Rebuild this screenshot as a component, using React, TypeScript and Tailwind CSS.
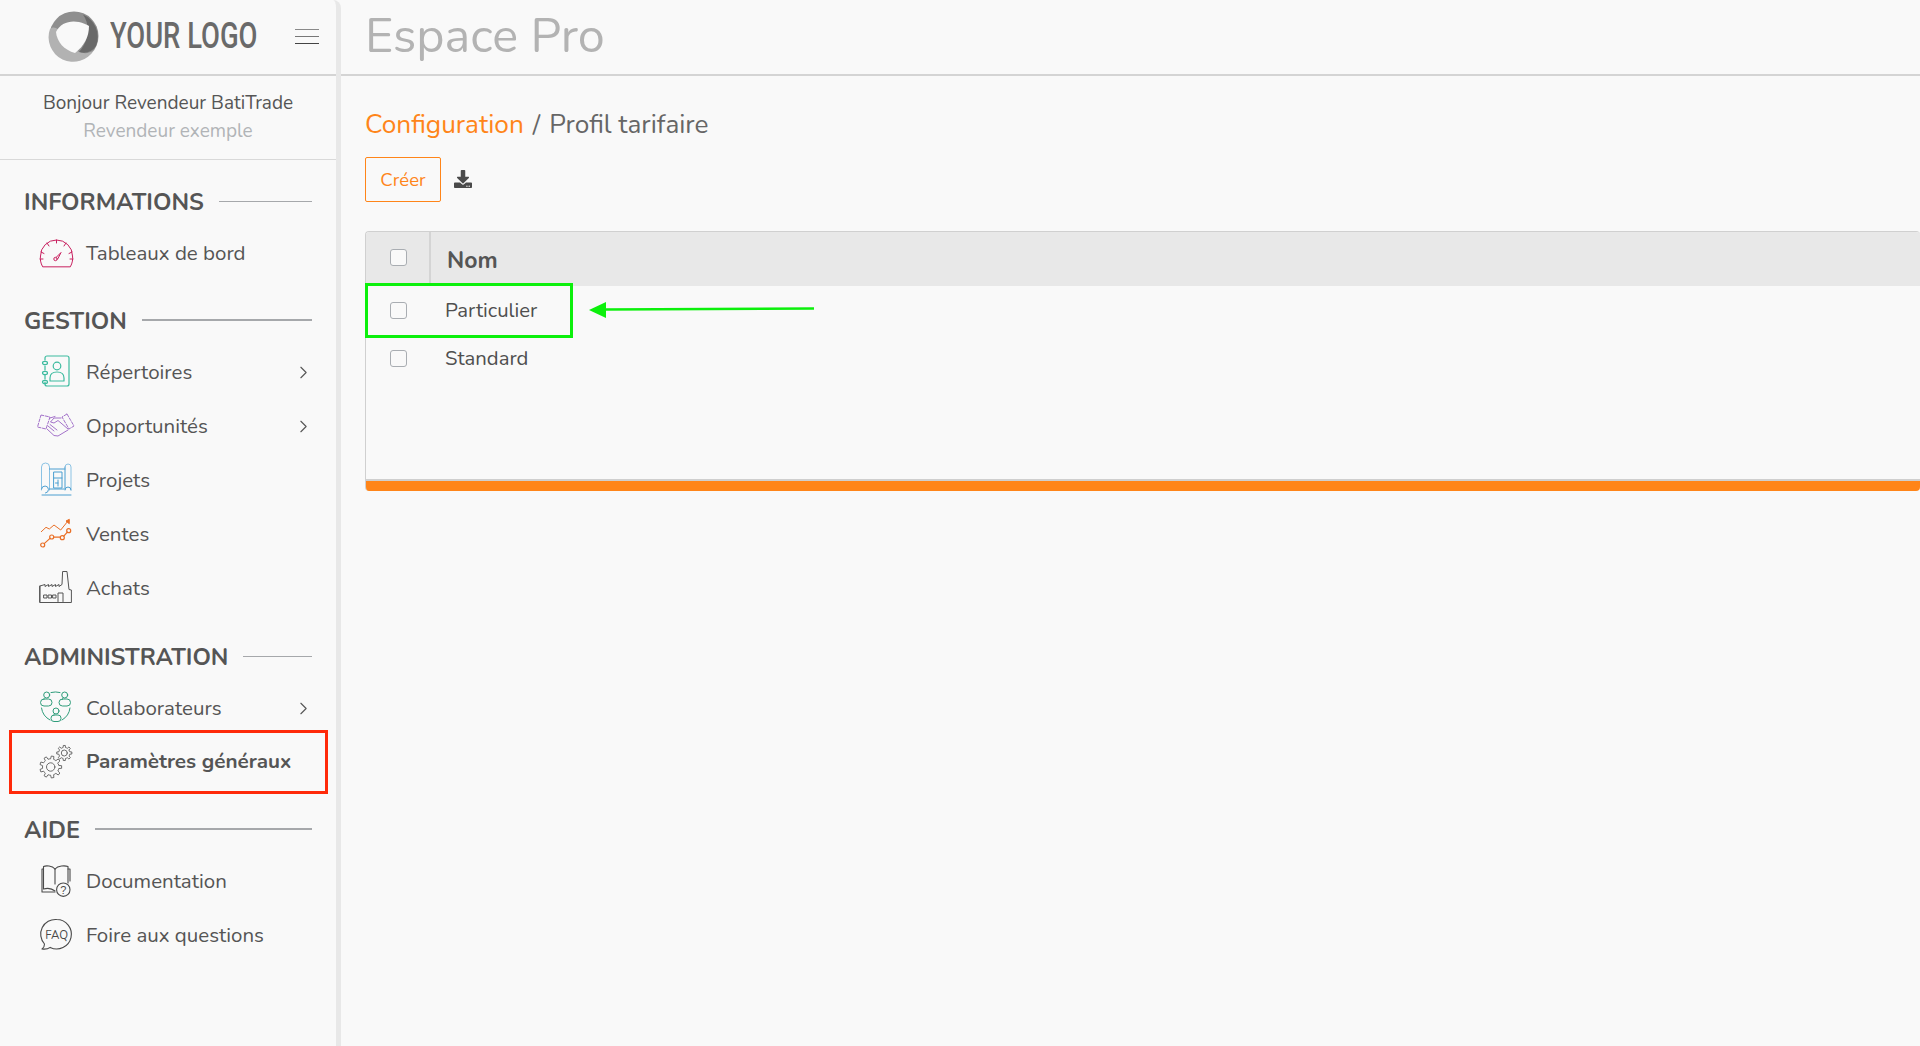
import React from "react";
import { ChevronRight } from "lucide-react";
import { FaDownload } from "react-icons/fa";

function gearPath(cx: number, cy: number, ro: number, ri: number, teeth: number) {
  const pts: string[] = [];
  const step = (Math.PI * 2) / teeth;
  for (let i = 0; i < teeth; i++) {
    const a = i * step;
    const seq: [number, number][] = [
      [ri, a - step * 0.5],
      [ri, a - step * 0.27],
      [ro, a - step * 0.17],
      [ro, a + step * 0.17],
      [ri, a + step * 0.27],
    ];
    seq.forEach(([r, t]) => {
      pts.push(`${(cx + r * Math.cos(t)).toFixed(2)} ${(cy + r * Math.sin(t)).toFixed(2)}`);
    });
  }
  return "M" + pts.join("L") + "Z";
}

function Svg({ children, color, w = 1 }: { children: React.ReactNode; color: string; w?: number }) {
  return (
    <svg width="42" height="42" viewBox="0 0 42 42" fill="none" stroke={color} strokeWidth={w} strokeLinejoin="round" strokeLinecap="round" className="shrink-0">
      {children}
    </svg>
  );
}

const Gauge = () => (
  <Svg color="#c8205f">
    <path d="M8.500 34.500 C6.500 31 6 27 6.500 24 A16 16 0 0 1 38.500 24 C39 27 38.500 31 36.500 34.500 Z" />
    <path d="M22.500 8v3M13 11l2 3M32 11l-2 3M7 20l3 1.500M38 20l-3 1.500M6 27h3M39 27h-3" />
    <path d="M22 25.500 L27 20.500 L24 26.500" />
    <circle cx="21.500" cy="27" r="1.700" />
  </Svg>
);
const Repertoires = () => (
  <Svg color="#3dbb9f" w={1.200}>
    <path d="M11 9V7a2 2 0 0 1 2-2h20a2 2 0 0 1 2 2v26a2 2 0 0 1-2 2H13a2 2 0 0 1-2-2v-2" />
    <path d="M11 15v4M11 24v4" />
    <ellipse cx="11" cy="12" rx="2.500" ry="1.600" />
    <ellipse cx="11" cy="22" rx="2.500" ry="1.600" />
    <ellipse cx="11" cy="31" rx="2.500" ry="1.600" />
    <circle cx="23" cy="15" r="3.800" />
    <path d="M16 30v-3c0-5 3.500-6 7-6s7 1 7 6v3Z" />
  </Svg>
);
const Handshake = () => (
  <Svg color="#9a63c4" w={0.900}>
    <path d="M7 10 L16 12 L12 24 L3.500 22 Z" strokeDasharray="3 1.500" />
    <path d="M33 9 L40 21 L35 24 L28 12 Z" strokeDasharray="3 1.500" />
    <path d="M16 13 L21 11.500 M27 13 L20 13 L16.500 17 L20 18 L24 15.500 L34 24" />
    <path d="M14 21 L20 26 M16 19.500 L23 25" />
    <path d="M13 24 L20 30.500 L24 31 L34 25" />
  </Svg>
);
const Projets = () => (
  <Svg color="#4b9ed0">
    <path d="M7.500 31V8a4 4 0 0 1 4-4 4 4 0 0 1 4 4v23" stroke="#8cc3e4" />
    <path d="M7.500 30a3.500 3.500 0 1 1 4 4" />
    <path d="M31 8a3 3 0 0 1 6 0v23" stroke="#8cc3e4" />
    <path d="M31 8v21M37 31a3 3 0 1 0-6 0" />
    <path d="M15.500 10H31M15.500 30H31M8 36H37" />
    <path d="M20 13H28V29H20Z M20 19H28 M24 21V27M21.500 24H24" />
  </Svg>
);
const Ventes = () => (
  <Svg color="#e96f26">
    <path d="M7.300 18.700 12 14.300 15.300 16 20 12 26.700 17 34 8" />
    <path d="M35 6.500 L32 8 L35 10.500 Z" fill="#e96f26" />
    <circle cx="8.700" cy="32" r="2" strokeWidth="1.200" />
    <circle cx="17.700" cy="24" r="2" strokeWidth="1.200" />
    <circle cx="28.300" cy="24.700" r="2" strokeWidth="1.200" />
    <circle cx="34.700" cy="17.700" r="2" strokeWidth="1.200" />
    <path d="M10.200 30.600 16 25.400M19.700 24.100H26.300M29.800 23.200 33.300 19.200" strokeWidth="1.200" />
  </Svg>
);
const Achats = () => (
  <Svg color="#555555">
    <path d="M6 34.500V19M6 19l5-1.500v2l3.500-2v2l3.500-2v2l3.500-2v2l3.500-2v2l3-2 .6-13h4.400l2 18 2.400 .5v12.500H6Z" />
    <path d="M10 28h3v3h-3ZM14.500 28h3v3h-3ZM19 28h3v3h-3ZM24 34.500V26h5v8.500" />
  </Svg>
);
const Collab = () => (
  <Svg color="#2f9d7b">
    <circle cx="12.700" cy="8" r="3" />
    <circle cx="30.700" cy="8" r="3" />
    <circle cx="22" cy="24" r="3" />
    <rect x="6.500" y="12" width="11.500" height="7" rx="3.500" />
    <rect x="25" y="12" width="11.500" height="7" rx="3.500" />
    <rect x="17" y="28" width="10" height="6.500" rx="3" />
    <path d="M17 5.500A18 18 0 0 1 26 5.500M7.500 21A16 16 0 0 0 16 33M36 21A16 16 0 0 1 28 33" />
  </Svg>
);
const Gears = () => (
  <Svg color="#5e5e5e" w={0.900}>
    <path d={gearPath(16.7, 26, 11, 8.2, 9)} />
    <circle cx="16.700" cy="26" r="4.200" />
    <path d={gearPath(30.3, 12, 7.6, 5.6, 8)} />
    <circle cx="30.300" cy="12" r="3" />
  </Svg>
);
const Book = () => (
  <Svg color="#4a4a4a" w={1.100}>
    <path d="M21 9C18 5.500 12 5.500 9.500 6.500V29C13 28 18 28.500 21 31" />
    <path d="M21 9C24 5.500 31 5.500 34 6.500V23" />
    <path d="M21 9V24" />
    <path d="M9.500 9H8V32H21" />
    <path d="M34 9h2v12" />
    <circle cx="29.300" cy="29.700" r="6.700" fill="#f9f9f9" />
    <text x="29.300" y="33.500" fontSize="11" textAnchor="middle" fill="#4a4a4a" stroke="none" fontFamily="Liberation Sans, sans-serif">?</text>
  </Svg>
);
const Faq = () => (
  <Svg color="#4a4a4a" w={1.100}>
    <path d="M22.700 5.500a14.700 14.700 0 1 1-6.500 27.900C14 35 11.500 35.500 8 35c1.500-1 2.500-3 2.500-5A14.700 14.700 0 0 1 22.700 5.500Z" />
    <text x="22.700" y="24.500" fontSize="11.500" textAnchor="middle" fill="#4a4a4a" stroke="none" fontFamily="Nunito, Noto Sans, sans-serif">FAQ</text>
  </Svg>
);

function Logo() {
  return (
    <svg width="52" height="52" viewBox="0 0 52 52" className="shrink-0">
      <circle cx="26" cy="26" r="24.500" fill="#8f8f8f" />
      <path d="M2 19 A24.500 24.500 0 0 0 46 40 C36 48 22 40 14 24 C10 17 5 16 2 19Z" fill="#b2b2b2" />
      <path d="M35 4.500 A24.500 24.500 0 0 1 48 36 C44 42 38 44 31 42 C42 30 42 14 35 4.500Z" fill="#696969" />
      <path d="M8 22 C12 13 22 10 31 12 C35 13 38 14 41 16 C41 27 36 36 27 43 C16 40 9 32 8 22Z" fill="#f9f9f9" />
    </svg>
  );
}

function Heading({ label, thick }: { label: string; thick?: boolean }) {
  return (
    <div className="flex h-10 items-center pl-6 pr-6 gap-[15px]">
      <span className="pt-[3px] text-[23.500px] font-bold text-[#555555] leading-none whitespace-nowrap">{label}</span>
      <span className={thick ? "flex-1 h-[2px] bg-[#a6a8ab]" : "flex-1 h-px bg-[#a6a8ab]"} />
    </div>
  );
}

function Item({ icon, label, chevron, bold }: { icon: React.ReactNode; label: string; chevron?: boolean; bold?: boolean }) {
  return (
    <div className="flex h-[54px] items-center pl-[34px] pr-[22px]">
      {icon}
      <span className={bold ? "ml-[10px] flex-1 text-[20.700px] font-bold text-[#555555]" : "ml-[10px] flex-1 text-[20.500px] text-[#555555]"}>{label}</span>
      {chevron && <ChevronRight size={21} strokeWidth={1.300} className="text-[#555555]" />}
    </div>
  );
}

function Box() {
  return <span className="block w-[17px] h-[17px] rounded-[3px] border border-[#a9adb2] bg-[#f9f9f9]" />;
}

export default function App() {
  return (
    <div className="relative flex w-[1920px] h-[1046px] overflow-hidden bg-[#f9f9f9] font-['Nunito','Noto_Sans',sans-serif] text-[#555555]">
      <aside className="w-[341px] shrink-0 border-r-[5px] border-[#e8e8e8] rounded-tr-lg">
        <div className="flex items-center h-[76px] border-b-2 border-[#d4d4d4] pl-[48px] pr-[17px] pb-[2px]">
          <Logo />
          <span className="ml-[10px] w-[145px] -mt-[2px] text-[37px] leading-none font-medium font-['Roboto',sans-serif] text-[#6a6a6a] whitespace-nowrap origin-left scale-x-[0.74]">YOUR LOGO</span>
          <div className="ml-auto flex flex-col w-6">
            <span className="block h-px bg-[#8a8a8a]" />
            <span className="block h-px bg-[#777777] mt-[6.500px]" />
            <span className="block h-px bg-[#444444] mt-[5.500px]" />
          </div>
        </div>
        <div className="h-[84px] border-b border-[#d9d9d9] flex flex-col items-center pt-[13px]">
          <div className="text-[19px] leading-7 text-[#555555]">Bonjour Revendeur BatiTrade</div>
          <div className="text-[19px] leading-7 text-[#b1b4b7]">Revendeur exemple</div>
        </div>
        <div className="pt-[21px]">
          <Heading label="INFORMATIONS" />
          <div className="mt-[5px]">
            <Item icon={<Gauge />} label="Tableaux de bord" />
          </div>
          <div className="mt-5">
            <Heading label="GESTION" thick />
          </div>
          <div className="mt-[5px]">
            <Item icon={<Repertoires />} label="Répertoires" chevron />
            <Item icon={<Handshake />} label="Opportunités" chevron />
            <Item icon={<Projets />} label="Projets" />
            <Item icon={<Ventes />} label="Ventes" />
            <Item icon={<Achats />} label="Achats" />
          </div>
          <div className="mt-[21px]">
            <Heading label="ADMINISTRATION" />
          </div>
          <div className="mt-[5px]">
            <Item icon={<Collab />} label="Collaborateurs" chevron />
            <Item icon={<Gears />} label="Paramètres généraux" bold />
          </div>
          <div className="mt-5">
            <Heading label="AIDE" thick />
          </div>
          <div className="mt-[5px]">
            <Item icon={<Book />} label="Documentation" />
            <Item icon={<Faq />} label="Foire aux questions" />
          </div>
        </div>
      </aside>

      <main className="flex-1 min-w-0">
        <div className="flex items-center h-[76px] border-b-2 border-[#d4d4d4] pl-6 pb-[2px]">
          <h1 className="text-[48.500px] leading-none text-[#b3b3b3] font-normal">Espace Pro</h1>
        </div>
        <div className="pl-6">
          <div className="pt-[32px] text-[26.200px] leading-[34px] whitespace-nowrap">
            <span className="text-[#ff8519]">Configuration</span>
            <span className="text-[#666666] ml-[9px]">/</span>
            <span className="text-[#666666] ml-[9px]">Profil tarifaire</span>
          </div>
          <div className="flex items-center mt-[15px]">
            <button className="w-[76px] h-[45px] pt-[3px] rounded-[2px] border-[1.500px] border-[#ff8519] text-[18.500px] text-[#ff8519]">Créer</button>
            <FaDownload size={18} className="ml-[13px] text-[#4a4a4a] -mt-[1px]" />
          </div>
          <div className="mt-[29px] rounded-[4px] overflow-hidden border-l border-t border-[#d0d0d0] h-[260px] flex flex-col">
            <div className="flex h-[54px] bg-[#e8e8e8] items-center">
              <div className="w-[65px] h-full border-r-2 border-[#d4d4d4] flex items-center justify-center pb-[4px] pl-px">
                <Box />
              </div>
              <span className="ml-4 pt-[4px] text-[23px] font-bold text-[#555555]">Nom</span>
            </div>
            <div className="flex-1 flex flex-col">
              <div className="flex items-center h-[48px]">
                <div className="w-[51px] flex justify-end pr-[10px]"><Box /></div>
                <span className="ml-[28px] text-[20.300px] text-[#4f4f4f]">Particulier</span>
              </div>
              <div className="flex items-center h-[48px]">
                <div className="w-[51px] flex justify-end pr-[10px]"><Box /></div>
                <span className="ml-[28px] text-[20.300px] text-[#4f4f4f]">Standard</span>
              </div>
            </div>
            <div className="h-[2px] bg-[#cfcfcf]" />
            <div className="h-[10px] bg-[#ff8519]" />
          </div>
        </div>
      </main>

      {/* Annotations over the page */}
      <div className="absolute left-[9px] top-[730px] w-[319px] h-[64px] border-[3px] border-[#ff2a0a]" />
      <div className="absolute left-[365px] top-[283px] w-[208px] h-[55px] border-[3px] border-[#0cf00c]" />
      <svg className="absolute left-[585px] top-[298px]" width="235" height="24" viewBox="0 0 235 24">
        <path d="M229 10.500 L20 11.500" stroke="#0cf00c" strokeWidth="2.500" fill="none" />
        <path d="M4 12 L21 4 L21 20 Z" fill="#0cf00c" />
      </svg>
    </div>
  );
}
